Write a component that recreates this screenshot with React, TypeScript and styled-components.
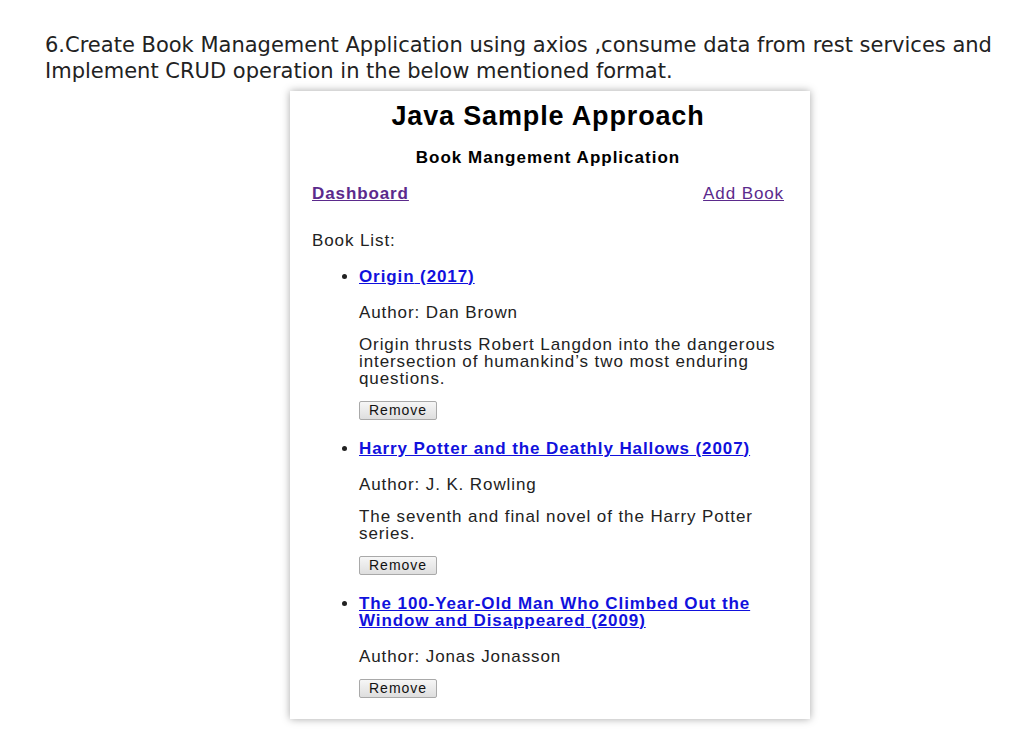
import { ReactElement } from "react"
import styled, { createGlobalStyle } from "styled-components"

type Book = {
	id: number
	title: string
	year: number
	author: string
	description?: string
}

const books: Book[] = [
	{
		id: 1,
		title: "Origin",
		year: 2017,
		author: "Dan Brown",
		description:
			"Origin thrusts Robert Langdon into the dangerous intersection of humankind’s two most enduring questions.",
	},
	{
		id: 2,
		title: "Harry Potter and the Deathly Hallows",
		year: 2007,
		author: "J. K. Rowling",
		description: "The seventh and final novel of the Harry Potter series.",
	},
	{
		id: 3,
		title: "The 100-Year-Old Man Who Climbed Out the Window and Disappeared",
		year: 2009,
		author: "Jonas Jonasson",
	},
]

const GlobalStyle = createGlobalStyle`
	body {
		margin: 0;
		background: #fff;
		color: #222;
	}
`

const App = (): ReactElement => {
	return (
		<S.Page>
			<GlobalStyle />
			<S.Task>
				6.Create Book Management Application using axios ,consume data from rest services and Implement CRUD
				operation in the below mentioned format.
			</S.Task>
			<S.Card>
				<S.Title>Java Sample Approach</S.Title>
				<S.Subtitle>Book Mangement Application</S.Subtitle>
				<S.Nav>
					<S.NavLink href="#" $bold>
						Dashboard
					</S.NavLink>
					<S.NavLink href="#">Add Book</S.NavLink>
				</S.Nav>
				<S.ListLabel>Book List:</S.ListLabel>
				<S.List>
					{books.map(book => (
						<S.Item key={book.id}>
							<S.BookLink href="#">
								{book.title} ({book.year})
							</S.BookLink>
							<S.Text>Author: {book.author}</S.Text>
							{book.description && <S.Text>{book.description}</S.Text>}
							<S.Button type="button">Remove</S.Button>
						</S.Item>
					))}
				</S.List>
			</S.Card>
		</S.Page>
	)
}

export const S = {
	Page: styled.div`
		padding: 32px 0 30px 45px;
	`,
	Task: styled.p`
		margin: 0;
		width: 970px;
		font-family: "DejaVu Sans", Verdana, sans-serif;
		font-size: 21px;
		line-height: 26px;
		color: #222;
	`,
	Card: styled.div`
		margin: 7px 0 0 245px;
		width: 520px;
		box-sizing: border-box;
		padding: 11px 26px 21px 22px;
		background: #fff;
		box-shadow: 0 0 8px rgba(0, 0, 0, 0.35);
		font-family: "Liberation Sans", Arial, sans-serif;
		color: #222;
		letter-spacing: 0.9px;
	`,
	Title: styled.h1`
		margin: 0;
		text-align: center;
		font-size: 27px;
		line-height: 28px;
		font-weight: bold;
		letter-spacing: 0.85px;
		color: #000;
	`,
	Subtitle: styled.h3`
		margin: 19px 0 0;
		text-align: center;
		font-size: 17px;
		line-height: 18px;
		font-weight: bold;
		letter-spacing: 1px;
		color: #000;
	`,
	Nav: styled.div`
		display: flex;
		justify-content: space-between;
		margin-top: 18px;
		font-size: 17px;
		line-height: 18px;
	`,
	NavLink: styled.a<{ $bold?: boolean }>`
		color: #5b2a8c;
		text-decoration: underline;
		font-weight: ${p => (p.$bold ? "bold" : "normal")};
	`,
	ListLabel: styled.p`
		margin: 29px 0 0;
		font-size: 17px;
		line-height: 18px;
	`,
	List: styled.ul`
		margin: 18px 0 0;
		padding-left: 47px;
		display: flex;
		flex-direction: column;
		gap: 20px;
	`,
	Item: styled.li`
		font-size: 17px;
		line-height: 17px;
	`,
	BookLink: styled.a`
		display: block;
		color: #1111dd;
		font-weight: bold;
		text-decoration: underline;
	`,
	Text: styled.p`
		margin: 19px 0 0;
		& + & {
			margin-top: 15px;
		}
	`,
	Button: styled.button`
		display: block;
		margin-top: 14px;
		padding: 0 9px;
		height: 19px;
		font-family: "Liberation Sans", Arial, sans-serif;
		font-size: 14px;
		line-height: 17px;
		letter-spacing: 1px;
		color: #111;
		background: linear-gradient(#f6f6f6, #dedede);
		border: 1px solid #a9a9a9;
		border-radius: 2px;
	`,
}

export default App
